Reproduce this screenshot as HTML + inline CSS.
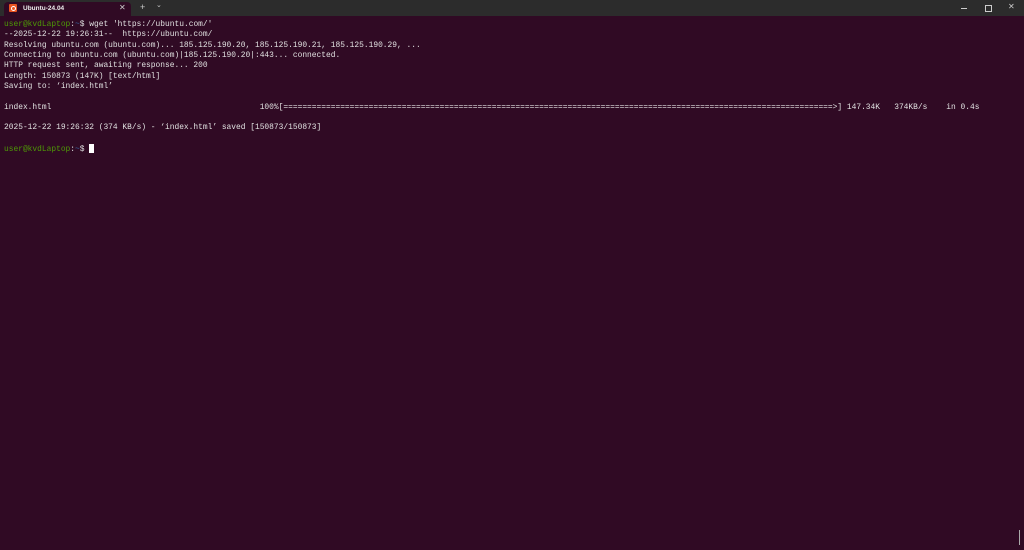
<!DOCTYPE html>
<html><head><meta charset="utf-8"><style>
html,body{margin:0;padding:0;width:1024px;height:550px;overflow:hidden;background:#300a24;}
.bar{position:absolute;left:0;top:0;width:1024px;height:16px;background:#2c2c2c;}
.tab{position:absolute;left:4px;top:2px;width:127px;height:14px;background:#300a24;border-radius:4px 4px 0 0;}
.ico{position:absolute;left:5px;top:2px;width:8px;height:8px;background:#e95420;border-radius:1px;}
.ico:after{content:"";position:absolute;left:2px;top:2px;width:3px;height:3px;border:1px solid #fff;border-radius:50%;}
.tt{position:absolute;left:19px;top:3px;font:bold 6.5px "Liberation Sans",sans-serif;color:#eee;}
.g{position:absolute;font:9px "Liberation Sans",sans-serif;color:#ccc;}
pre{position:absolute;left:4px;top:20px;margin:0;font:7.9px/10.35px "Liberation Mono",monospace;color:#e0e0e0;}
.u{color:#4e9a06}.b{color:#3465a4}
.cur{display:inline-block;width:5px;height:9px;background:#fff;vertical-align:-2px;}
</style></head><body>
<div class="bar"></div>
<div class="tab"><div class="ico"></div><div class="tt">Ubuntu-24.04</div><div class="g" style="left:115px;top:1px;font-size:8px">✕</div></div>
<div class="g" style="left:140px;top:2px">+</div>
<div class="g" style="left:156px;top:1px;font-size:7px">⌄</div>
<div style="position:absolute;left:961px;top:8px;width:6px;height:1px;background:#ccc"></div>
<div style="position:absolute;left:985px;top:5px;width:5px;height:5px;border:1px solid #ccc"></div>
<div class="g" style="left:1008px;top:2px;font-size:8px">✕</div>
<div style="position:absolute;left:1019px;top:530px;width:1px;height:15px;background:#aaa"></div>
<pre><span class="u">user@kvdLaptop</span>:<span class="b">~</span>$ wget 'https://ubuntu.com/'
--2025-12-22 19:26:31--  https://ubuntu.com/
Resolving ubuntu.com (ubuntu.com)... 185.125.190.20, 185.125.190.21, 185.125.190.29, ...
Connecting to ubuntu.com (ubuntu.com)|185.125.190.20|:443... connected.
HTTP request sent, awaiting response... 200
Length: 150873 (147K) [text/html]
Saving to: ‘index.html’

index.html                                            100%[====================================================================================================================>] 147.34K   374KB/s    in 0.4s

2025-12-22 19:26:32 (374 KB/s) - ‘index.html’ saved [150873/150873]

<span class="u">user@kvdLaptop</span>:<span class="b">~</span>$ <span class="cur"></span></pre>
</body></html>
